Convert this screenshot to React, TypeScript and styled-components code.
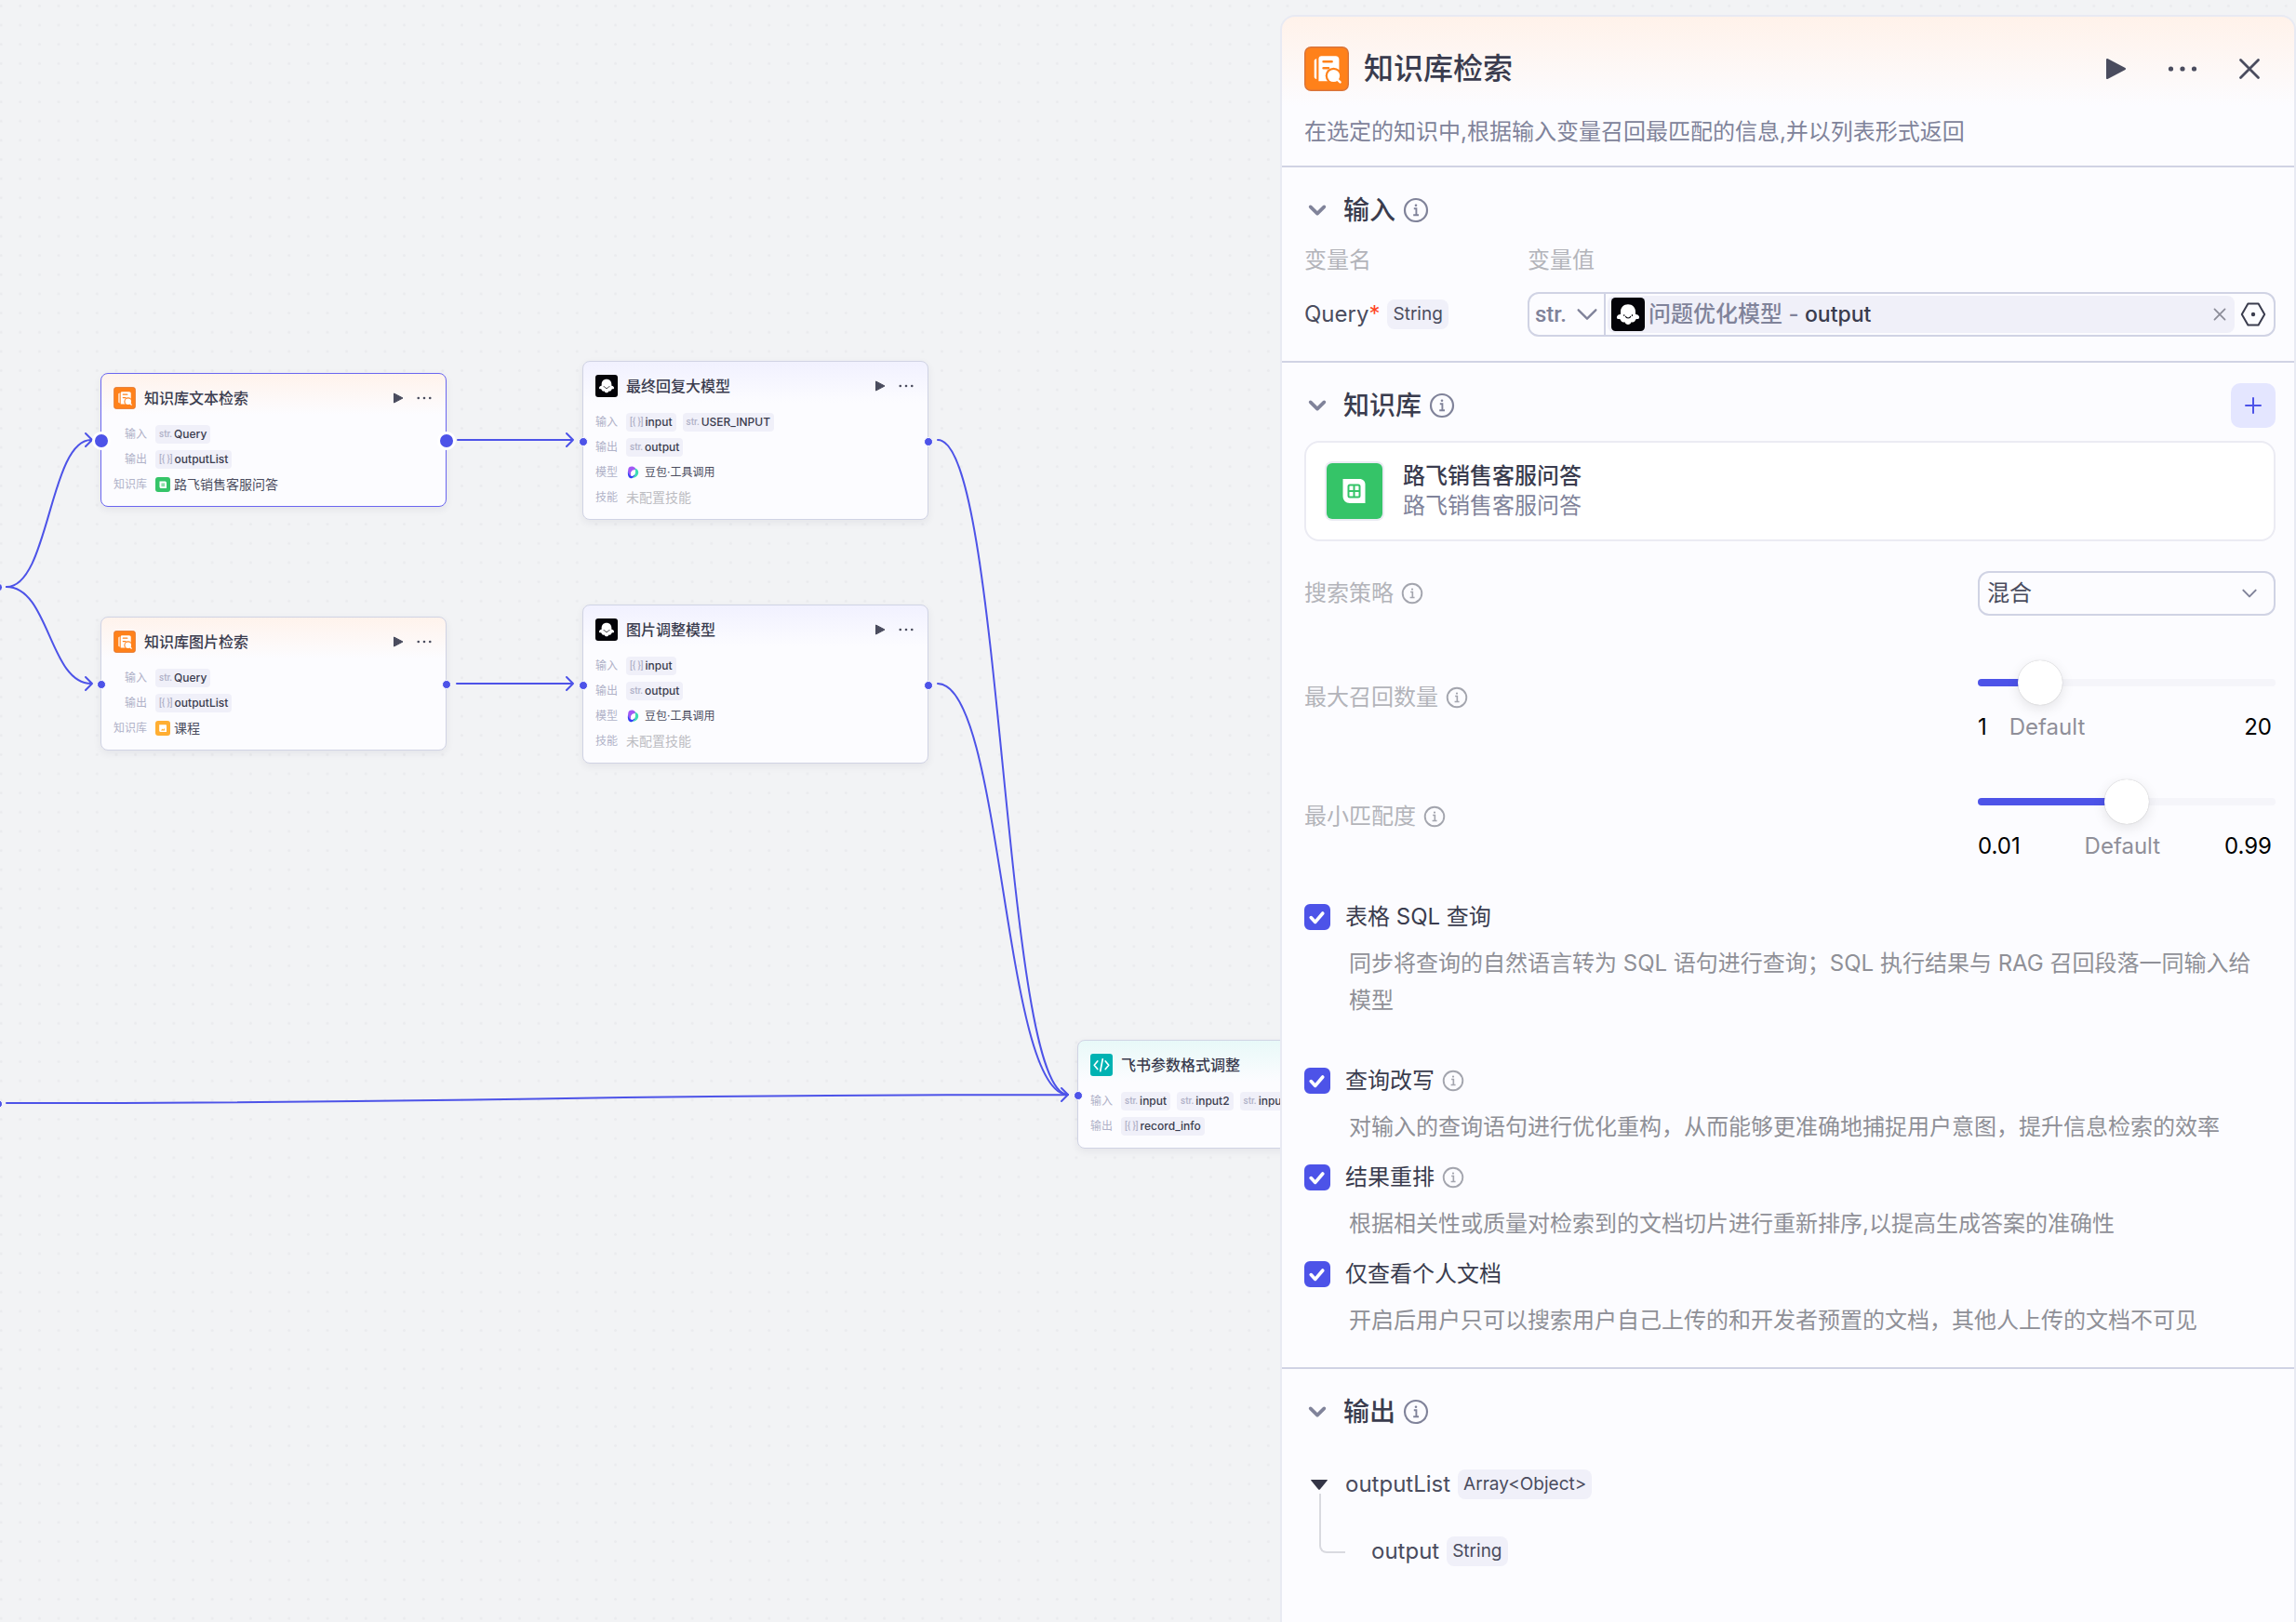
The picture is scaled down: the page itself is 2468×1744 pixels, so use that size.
import React, { useState } from "react";
import styled, { createGlobalStyle, css } from "styled-components";

const color = {
  canvas: "#f2f3f5",
  surface: "#fcfcff",
  accent: "#4d53e8",
  heading: "#3a3c4e",
  body: "#4a4c5e",
  muted: "#80839a",
  faint: "#b3b4ba",
  label: "#b0b2c8",
  hint: "#8f9097",
  line: "#d0d3e4",
  softLine: "#e8eaf3",
  chip: "#f0f0f9",
};

const GlobalStyle = createGlobalStyle`
  *, *::before, *::after { box-sizing: border-box; }
  body {
    margin: 0;
    background: ${color.canvas};
    color: ${color.heading};
    font-family: Inter, "Noto Sans CJK SC", sans-serif;
    font-size: 24px;
    line-height: 32px;
  }
  button, input, select { font: inherit; color: inherit; margin: 0; }
  h1, h2, h3, p { margin: 0; font-weight: 500; }
`;

/* ---------- shell ---------- */

const Workspace = styled.div`
  display: grid;
  grid-template-columns: minmax(0, 1fr);
  min-height: 100vh;
`;

const Canvas = styled.main`
  grid-area: 1 / 1;
  position: relative;
  overflow: hidden;
`;

const Wires = styled.svg`
  display: block;
  position: absolute;
  inset: 0;
  width: 100%;
  height: 100%;
`;

const IconButton = styled.button<{ $size: number; $tone?: string }>`
  display: inline-flex;
  align-items: center;
  align-self: center;
  justify-content: center;
  flex: none;
  width: ${(p) => p.$size}px;
  height: ${(p) => p.$size}px;
  padding: 0;
  border: 0;
  background: none;
  color: ${(p) => p.$tone ?? color.body};
  cursor: pointer;
`;

/* ---------- icons ---------- */

const Icon = styled.svg<{ $size: number }>`
  display: block;
  flex: none;
  width: ${(p) => p.$size}px;
  height: ${(p) => p.$size}px;
`;

const InfoIcon = ({ size, tone = color.muted }: { size: number; tone?: string }) => (
  <Icon $size={size} viewBox="0 0 28 28" fill="none" stroke={tone} strokeWidth="2.2" aria-hidden="true">
    <circle cx="14" cy="14" r="12" />
    <path d="M11.8 12.2H14.4V19M11.2 19.2H17" strokeWidth="1.9" />
    <circle cx="14" cy="8.8" r="1.3" fill={tone} stroke="none" />
  </Icon>
);

const ChevronIcon = ({ size, weight = 2 }: { size: number; weight?: number }) => (
  <Icon $size={size} viewBox="0 0 24 24" fill="none" stroke="currentColor" strokeWidth={weight} strokeLinecap="round" strokeLinejoin="round" aria-hidden="true">
    <path d="M4 8L12 16L20 8" />
  </Icon>
);

const PlayIcon = ({ size }: { size: number }) => (
  <Icon $size={size} viewBox="0 0 24 24" fill="currentColor" stroke="currentColor" strokeLinejoin="round" aria-hidden="true">
    <path d="M3 2L22 12L3 22Z" strokeWidth="2" />
  </Icon>
);

const MoreIcon = ({ size }: { size: number }) => (
  <Icon $size={size} viewBox="0 0 32 32" fill="currentColor" aria-hidden="true">
    <circle cx="3.5" cy="16" r="2.6" />
    <circle cx="16" cy="16" r="2.6" />
    <circle cx="28.5" cy="16" r="2.6" />
  </Icon>
);

const CrossIcon = ({ size, weight }: { size: number; weight: number }) => (
  <Icon $size={size} viewBox="0 0 24 24" fill="none" stroke="currentColor" strokeWidth={weight} strokeLinecap="round" aria-hidden="true">
    <path d="M2.5 2.5L21.5 21.5M21.5 2.5L2.5 21.5" />
  </Icon>
);

const KnowledgeIcon = ({ size }: { size: number }) => (
  <Icon $size={size} viewBox="0 0 48 48" aria-hidden="true">
    <rect x="0.7" y="0.7" width="46.6" height="46.6" rx="6.5" fill="#ff811a" stroke="#d9743a" strokeWidth="1.4" />
    <path d="M13.2 13.2C11.6 13.6 10.7 14.3 10.7 15.6V32.6C10.7 34 11.6 34.8 13.2 35Z" fill="#fff" />
    <path d="M18.4 10.3H33.6C36 10.3 37.4 11.7 37.4 14V37.2H15.4V13.4C15.4 11.4 16.6 10.3 18.4 10.3Z" fill="#fff" />
    <path d="M20.6 16.3H29.6M20.6 23.2H26" stroke="#ff811a" strokeWidth="2.6" strokeLinecap="round" />
    <circle cx="31.5" cy="31.5" r="8.8" fill="#ff811a" />
    <path d="M30 37.2H39V40H30Z" fill="#ff811a" />
    <circle cx="31.5" cy="31.5" r="6.6" fill="#fff" />
    <path d="M35.5 35.5L38.6 38.4" stroke="#fff" strokeWidth="2.4" strokeLinecap="round" />
  </Icon>
);

const BotIcon = ({ size }: { size: number }) => (
  <Icon $size={size} viewBox="0 0 36 36" aria-hidden="true">
    <rect width="36" height="36" rx="4.5" fill="#030308" />
    <path
      d="M18 7.2C22.8 7.2 26 10.6 26 15V17.8C26.6 18 28.2 18.2 29.4 19.4C30.9 21 29.9 23.4 27.6 23C26.8 22.9 26.3 23.2 26 24C25.4 26.2 23.4 27 21.6 26.2C20.8 28.2 19.6 28.9 18 28.9C16.4 28.9 15.2 28.2 14.4 26.2C12.6 27 10.6 26.2 10 24C9.7 23.2 9.2 22.9 8.4 23C6.1 23.4 5.1 21 6.6 19.4C7.8 18.2 9.4 18 10 17.8V15C10 10.6 13.2 7.2 18 7.2Z"
      fill="#fff"
    />
    <path d="M13.8 18.6V19.4M22.4 18.6V19.4" stroke="#030308" strokeWidth="1.1" strokeLinecap="round" />
    <path d="M15.4 20.2C16.2 22.6 20 22.6 20.8 20.2" stroke="#030308" strokeWidth="1.1" fill="none" strokeLinecap="round" />
  </Icon>
);

const CodeIcon = ({ size }: { size: number }) => (
  <Icon $size={size} viewBox="0 0 48 48" fill="none" aria-hidden="true">
    <rect width="48" height="48" rx="6" fill="#00b2b2" />
    <path d="M15.5 16L8.5 24.5L15.5 33M32.5 16L39.5 24.5L32.5 33M26.5 11.5L21.5 37.5" stroke="#fff" strokeWidth="3.4" strokeLinecap="round" strokeLinejoin="round" />
  </Icon>
);

const SheetIcon = ({ size }: { size: number }) => (
  <Icon $size={size} viewBox="0 0 64 64" fill="none" aria-hidden="true">
    <rect width="64" height="64" rx="8" fill="#ebebf3" />
    <rect x="2" y="2" width="60" height="60" rx="6" fill="#35c468" />
    <path d="M19.5 19H37.5C41 19 43.5 21.5 43.5 25V45H27C22.5 45 19.5 42 19.5 37.5Z" fill="#fff" />
    <rect x="25.5" y="25.5" width="12" height="13" rx="1.5" stroke="#35c468" strokeWidth="2" />
    <path d="M31.5 25.5V38.5M25.5 32H37.5" stroke="#35c468" strokeWidth="2" />
  </Icon>
);

const SheetBadge = () => (
  <Icon $size={16} viewBox="0 0 16 16" fill="none" aria-hidden="true">
    <rect width="16" height="16" rx="3" fill="#35c468" />
    <path d="M4.5 4.5H10.2C11.2 4.5 12 5.2 12 6.2V12H6.4C5.2 12 4.5 11.2 4.5 10.2Z" fill="#fff" />
    <rect x="6.4" y="6.4" width="3.8" height="3.8" fill="#8fdfab" />
  </Icon>
);

const ImageBadge = () => (
  <Icon $size={16} viewBox="0 0 16 16" fill="none" aria-hidden="true">
    <rect width="16" height="16" rx="3" fill="#ffae32" />
    <path d="M4.2 4.2H11C11.5 4.2 12 4.6 12 5.2V12H5.4C4.7 12 4.2 11.5 4.2 10.8Z" fill="#fff" />
    <path d="M6 10.4L7.4 8.6L8.4 9.6L10 8V10.4Z" fill="#ffae32" />
  </Icon>
);

const DoubaoIcon = () => (
  <Icon $size={16} viewBox="0 0 16 16" fill="none" aria-hidden="true">
    <path d="M2.4 4C3.4 1.4 7 .9 9 2.6C10.8 4 10.4 5 8.2 5.4C5.8 6 4.8 8 4.9 12.8C2.6 11.8 1.6 7.6 2.4 4Z" fill="#a259f5" />
    <path d="M2.2 6C2.4 9 3.4 11.2 5.4 11.6C7.6 12 9 10.6 9.8 9C9.6 12 7.4 14.6 4.8 14.2C1.8 13.6 1.4 9 2.2 6Z" fill="#3340f5" />
    <path d="M9.4 3.4C11.8 4 13.4 5.8 13.2 8.2C13 11 10.6 13.4 7 14C9.6 11.8 10.8 8 9.4 3.4Z" fill="#3ddcb4" />
    <path d="M7.6 5.4C9.4 5.2 10 6.6 9.6 8.6C9.2 10.6 7.8 12 6.2 11.8C4.8 11.4 4.8 9.2 5.4 7.6C5.8 6.4 6.6 5.6 7.6 5.4Z" fill="#fff" />
  </Icon>
);

const HexIcon = () => (
  <Icon $size={28} viewBox="0 0 28 28" fill="none" stroke="currentColor" strokeWidth="2" strokeLinejoin="round" aria-hidden="true">
    <path d="M8.4 2.4H19.6L26.2 14L19.6 25.6H8.4L1.8 14Z" />
    <circle cx="14" cy="14" r="2.2" fill="currentColor" stroke="none" />
  </Icon>
);

/* ---------- canvas nodes ---------- */

const NodeCard = styled.article<{ $x: number; $y: number; $tint: string; $selected?: boolean }>`
  position: absolute;
  left: ${(p) => p.$x}px;
  top: ${(p) => p.$y}px;
  display: flex;
  flex-direction: column;
  gap: 17px;
  width: 372px;
  padding: 14px 13px 13px;
  border: 1px solid ${(p) => (p.$selected ? "#6a66f0" : color.line)};
  border-radius: 8px;
  background: linear-gradient(${(p) => p.$tint}, ${color.surface} 44px) ${color.surface};
  box-shadow: 0 3px 8px rgba(40, 44, 70, 0.07);
  font-size: 12px;
  line-height: 20px;
`;

const NodeHeader = styled.header`
  display: flex;
  align-items: center;
  gap: 9px;
  height: 24px;
`;

const NodeTitle = styled.h3`
  flex: 1;
  font-size: 16px;
  line-height: 24px;
`;

const NodeActions = styled.div`
  display: flex;
  align-items: center;
  gap: 10px;
`;

const NodeRows = styled.dl<{ $labelWidth: number }>`
  display: grid;
  grid-template-columns: ${(p) => p.$labelWidth}px minmax(0, 1fr);
  gap: 7px 9px;
  margin: 0;
`;

const RowLabel = styled.dt`
  text-align: right;
  color: ${color.label};
`;

const RowValue = styled.dd<{ $gap: number }>`
  display: flex;
  align-items: center;
  gap: ${(p) => p.$gap}px;
  height: 20px;
  margin: 0;
  white-space: nowrap;
`;

const TypeMark = styled.span`
  color: ${color.label};
  font-family: Roboto, sans-serif;
  font-size: 10px;
`;

const VariableTag = styled.span`
  display: inline-flex;
  align-items: center;
  gap: 2px;
  height: 20px;
  padding: 0 4px;
  border-radius: 4px;
  background: ${color.chip};
  color: ${color.heading};
  font-weight: 500;
`;

const Plain = styled.span<{ $size: number; $tone?: string }>`
  color: ${(p) => p.$tone ?? color.body};
  font-size: ${(p) => p.$size}px;
`;

const Port = styled.span<{ $side: "left" | "right"; $large?: boolean }>`
  position: absolute;
  top: calc(50% + 1px);
  left: ${(p) => (p.$side === "left" ? "0" : "calc(100% + 1px)")};
  width: ${(p) => (p.$large ? 20 : 10)}px;
  height: ${(p) => (p.$large ? 20 : 10)}px;
  border: ${(p) => (p.$large ? 3 : 1)}px solid #fff;
  border-radius: 50%;
  background: ${color.accent};
  transform: translate(-50%, -50%);
`;

type Variable = { type: "str" | "list"; name: string };
type Row = { label: string; tags?: Variable[]; content?: React.ReactNode };
type FlowNode = {
  title: string;
  icon: React.ReactNode;
  x: number;
  y: number;
  tint: string;
  labelWidth: number;
  selected?: boolean;
  runnable?: boolean;
  rows: Row[];
};

const str = (name: string): Variable => ({ type: "str", name });
const list = (name: string): Variable => ({ type: "list", name });

const orangeTint = "#fff3ec";
const violetTint = "#f1f1ff";

const model = (
  <>
    <DoubaoIcon />
    <Plain $size={12}>豆包·工具调用</Plain>
  </>
);
const noSkill = (
  <Plain $size={14} $tone="#bcbdc2">
    未配置技能
  </Plain>
);

const nodes: FlowNode[] = [
  {
    title: "知识库文本检索",
    icon: <KnowledgeIcon size={24} />,
    x: 108,
    y: 401,
    tint: orangeTint,
    labelWidth: 36,
    selected: true,
    runnable: true,
    rows: [
      { label: "输入", tags: [str("Query")] },
      { label: "输出", tags: [list("outputList")] },
      { label: "知识库", content: <><SheetBadge /><Plain $size={14}>路飞销售客服问答</Plain></> },
    ],
  },
  {
    title: "知识库图片检索",
    icon: <KnowledgeIcon size={24} />,
    x: 108,
    y: 663,
    tint: orangeTint,
    labelWidth: 36,
    runnable: true,
    rows: [
      { label: "输入", tags: [str("Query")] },
      { label: "输出", tags: [list("outputList")] },
      { label: "知识库", content: <><ImageBadge /><Plain $size={14}>课程</Plain></> },
    ],
  },
  {
    title: "最终回复大模型",
    icon: <BotIcon size={24} />,
    x: 626,
    y: 388,
    tint: violetTint,
    labelWidth: 24,
    runnable: true,
    rows: [
      { label: "输入", tags: [list("input"), str("USER_INPUT")] },
      { label: "输出", tags: [str("output")] },
      { label: "模型", content: model },
      { label: "技能", content: noSkill },
    ],
  },
  {
    title: "图片调整模型",
    icon: <BotIcon size={24} />,
    x: 626,
    y: 650,
    tint: violetTint,
    labelWidth: 24,
    runnable: true,
    rows: [
      { label: "输入", tags: [list("input")] },
      { label: "输出", tags: [str("output")] },
      { label: "模型", content: model },
      { label: "技能", content: noSkill },
    ],
  },
  {
    title: "飞书参数格式调整",
    icon: <CodeIcon size={24} />,
    x: 1158,
    y: 1118,
    tint: "#e8f9f8",
    labelWidth: 24,
    rows: [
      { label: "输入", tags: [str("input"), str("input2"), str("input")] },
      { label: "输出", tags: [list("record_info")] },
    ],
  },
];

const NodeView = ({ node }: { node: FlowNode }) => (
  <NodeCard $x={node.x} $y={node.y} $tint={node.tint} $selected={node.selected}>
    <NodeHeader>
      {node.icon}
      <NodeTitle>{node.title}</NodeTitle>
      {node.runnable && (
        <NodeActions>
          <IconButton $size={16} aria-label="运行">
            <PlayIcon size={12} />
          </IconButton>
          <IconButton $size={20} aria-label="更多">
            <MoreIcon size={16} />
          </IconButton>
        </NodeActions>
      )}
    </NodeHeader>
    <NodeRows $labelWidth={node.labelWidth}>
      {node.rows.map((row) => (
        <React.Fragment key={row.label}>
          <RowLabel>{row.label}</RowLabel>
          <RowValue $gap={row.tags ? 7 : 4}>
            {row.content}
            {row.tags?.map((tag, i) => (
              <VariableTag key={i}>
                <TypeMark>{tag.type === "str" ? "str." : "[{ }]"}</TypeMark>
                {tag.name}
              </VariableTag>
            ))}
          </RowValue>
        </React.Fragment>
      ))}
    </NodeRows>
    <Port $side="left" $large={node.selected} />
    <Port $side="right" $large={node.selected} />
  </NodeCard>
);

const FlowWires = () => (
  <Wires aria-hidden="true">
    <defs>
      <pattern id="dots" x="-9.2" y="-4" width="20.64" height="20.64" patternUnits="userSpaceOnUse">
        <circle cx="10.3" cy="10.3" r="1.5" fill="#eaebee" />
      </pattern>
    </defs>
    <rect width="100%" height="100%" fill="url(#dots)" />
    <g fill="none" stroke={color.accent} strokeWidth="2" strokeLinecap="round" strokeLinejoin="round">
      <path d="M7 631C53 631 53 473 98 473M92 466L99 473L92 480" />
      <path d="M7 631C53 631 53 735 98 735M92 728L99 735L92 742" />
      <path d="M492 473H616M609 466L616 473L609 480" />
      <path d="M491 735H616M609 728L616 735L609 742" />
      <path d="M1008 473C1078 473 1078 1177 1148 1177" />
      <path d="M1008 735C1078 735 1078 1177 1148 1177" />
      <path d="M7 1186C577 1186 577 1177 1148 1177M1141 1170L1148 1177L1141 1184" />
    </g>
    <g fill={color.accent} stroke="#fff">
      <circle cx="-2" cy="631.5" r="4.5" />
      <circle cx="-2" cy="1187" r="4.5" />
    </g>
  </Wires>
);

/* ---------- side panel ---------- */

const Panel = styled.aside`
  grid-area: 1 / 1;
  position: relative;
  justify-self: end;
  width: min(1092px, 100%);
  margin-top: 16px;
  border: 2px solid ${color.softLine};
  border-bottom: 0;
  border-radius: 16px 16px 0 0;
  background: linear-gradient(#fff2ea, ${color.surface} 96px) ${color.surface};
`;

const PanelHeader = styled.header`
  padding: 32px 20px 20px 24px;
`;

const TitleBar = styled.div`
  display: flex;
  align-items: center;
  gap: 16px;
  height: 48px;
`;

const PanelTitle = styled.h1`
  flex: 1;
  font-size: 32px;
  line-height: 48px;
`;

const PanelActions = styled.div`
  display: flex;
  gap: 24px;
  padding-right: 4px;
`;

const Summary = styled.p`
  margin-top: 28px;
  color: ${color.muted};
  font-weight: 400;
`;

const Section = styled.section<{ $bottom: number }>`
  padding: 22px 20px ${(p) => p.$bottom}px 24px;
  border-top: 2px solid ${color.line};
`;

const SectionHead = styled.div`
  display: flex;
  align-items: center;
  height: 48px;
  gap: 8px;
`;

const SectionTitle = styled.h2`
  font-size: 28px;
  line-height: 40px;
  margin-left: 6px;
`;

const AddButton = styled.button`
  display: grid;
  place-items: center;
  width: 48px;
  height: 48px;
  margin-left: auto;
  padding: 0;
  border: 0;
  border-radius: 10px;
  background: #e4e6ff;
  color: ${color.accent};
`;

const FieldGrid = styled.div`
  display: grid;
  grid-template-columns: 240px minmax(0, 1fr);
  align-items: center;
  row-gap: 18px;
  margin-top: 14px;
`;

const FieldHead = styled.span`
  color: ${color.faint};
`;

const NameLine = styled.div`
  display: flex;
  align-items: center;
  gap: 8px;
  color: ${color.body};
`;

const Required = styled.span`
  color: #ff441e;
`;

const TypeBadge = styled.span`
  padding: 0 6px;
  border-radius: 8px;
  background: ${color.chip};
  color: ${color.body};
  font-size: 19px;
`;

const ValueBox = styled.div`
  display: flex;
  height: 48px;
  padding-right: 8px;
  border: 2px solid ${color.line};
  border-radius: 12px;
`;

const SelectShell = styled.span<{ $framed?: boolean }>`
  display: grid;
  align-items: center;
  color: ${color.muted};

  > * { grid-area: 1 / 1; }
  > svg { justify-self: end; pointer-events: none; }

  ${(p) =>
    p.$framed
      ? css`
          width: 320px;
          height: 48px;
          padding-right: 16px;
          border: 2px solid ${color.line};
          border-radius: 12px;
        `
      : css`
          width: 82px;
          padding-right: 4px;
          border-right: 2px solid ${color.line};
        `}
`;

const SelectBox = styled.select<{ $compact?: boolean }>`
  appearance: none;
  width: 100%;
  height: 44px;
  padding: 0 0 0 ${(p) => (p.$compact ? 6 : 8)}px;
  border: 0;
  background: none;
  outline: none;
  color: ${(p) => (p.$compact ? color.muted : color.body)};
  ${(p) =>
    p.$compact &&
    css`
      font-family: Roboto, sans-serif;
      font-weight: 500;
    `}
`;

const Reference = styled.div`
  display: flex;
  flex: 1;
  align-items: center;
  margin: 2px 6px 2px 2px;
  padding: 0 8px 0 4px;
  border-radius: 8px;
  background: ${color.chip};
  color: ${color.muted};
  font-weight: 500;
  white-space: pre;
`;

const ReferenceText = styled.span`
  flex: 1;
  padding-left: 4px;
`;

const ReferenceField = styled.b`
  color: ${color.heading};
  font-size: 23px;
  font-weight: 500;
`;

const DatasetCard = styled.div`
  display: flex;
  align-items: center;
  gap: 20px;
  margin-top: 14px;
  padding: 20px;
  border: 2px solid #ebebf3;
  border-radius: 16px;
  background: #fff;
`;

const DatasetName = styled.h3`
  font-size: 24px;
  line-height: 32px;
`;

const DatasetNote = styled.p`
  color: ${color.muted};
  font-weight: 400;
`;

const Settings = styled.div`
  display: grid;
  gap: 32px;
  margin-top: 32px;
`;

const SettingRow = styled.div<{ $spaced?: boolean }>`
  display: flex;
  align-items: center;
  justify-content: space-between;
  margin-bottom: ${(p) => (p.$spaced ? 8 : 0)}px;
`;

const SettingLabel = styled.label`
  display: flex;
  align-items: center;
  gap: 8px;
  color: ${color.faint};
`;

const SliderBlock = styled.div`
  width: 320px;
  padding-top: 8px;
`;

const Slider = styled.input`
  appearance: none;
  display: block;
  width: 100%;
  height: 48px;
  background: none;

  &::-webkit-slider-runnable-track {
    height: 8px;
    border-radius: 4px;
    background: linear-gradient(${color.accent}, ${color.accent}) 0 0 / var(--filled) 100% no-repeat #f5f5fa;
  }

  &::-webkit-slider-thumb {
    appearance: none;
    width: 48px;
    height: 48px;
    margin-top: -20px;
    border: 0;
    border-radius: 50%;
    background: #fff;
    box-shadow: 0 0 1px rgba(0, 0, 0, 0.3), 0 4px 14px rgba(0, 0, 0, 0.1);
  }
`;

const SliderScale = styled.div<{ $near?: boolean }>`
  display: flex;
  justify-content: ${(p) => (p.$near ? "flex-start" : "space-between")};
  gap: 24px;
  padding-right: 4px;
  margin-top: 8px;
  color: #000;

  span:nth-child(2) { color: #8f8f99; }
  span:last-child { margin-left: ${(p) => (p.$near ? "auto" : "0")}; }
`;

const Options = styled.div`
  display: grid;
  gap: 18px;
  margin-top: 44px;
`;

const Option = styled.div<{ $after?: number }>`
  margin-bottom: ${(p) => p.$after ?? 0}px;
`;

const OptionHead = styled.div`
  display: flex;
  align-items: center;
  gap: 8px;
`;

const OptionLabel = styled.label`
  display: flex;
  align-items: center;
  gap: 16px;
`;

const TickShell = styled.span`
  display: grid;
  place-items: center;

  > * { grid-area: 1 / 1; }
  > svg { pointer-events: none; }
`;

const Tick = styled.input`
  appearance: none;
  width: 28px;
  height: 28px;
  border: 2px solid ${color.line};
  border-radius: 6px;

  &:checked {
    border-color: ${color.accent};
    background: ${color.accent};
  }
`;

const OptionNote = styled.p`
  margin-top: 14px;
  padding: 0 12px 0 48px;
  color: ${color.hint};
  font-weight: 400;
  line-height: 40px;
`;

const Tree = styled.ul`
  margin: 38px 0 0;
  padding: 0 0 0 6px;
  list-style: none;
`;

const SubTree = styled.ul`
  margin: 0;
  padding: 0;
  list-style: none;
`;

const TreeLine = styled.div`
  display: flex;
  align-items: center;
  gap: 18px;
`;

const TreeChild = styled.li`
  display: grid;
  grid-template-columns: 28px 1fr;
  align-items: end;
  column-gap: 28px;
  padding-left: 10px;
`;

const Branch = styled.span`
  height: 64px;
  margin: -6px 0 14px;
  border: solid #d9dae0;
  border-width: 0 0 2px 2px;
  border-bottom-left-radius: 8px;
`;

const TreeToggle = () => (
  <Icon $size={20} viewBox="0 0 20 20" fill="#343546" aria-hidden="true">
    <path d="M1.8 5H18.2C18.9 5 19 5.6 18.6 6.1L11 15.2C10.4 15.9 9.6 15.9 9 15.2L1.4 6.1C1 5.6 1.1 5 1.8 5Z" />
  </Icon>
);

const SectionHeading = ({ title, children }: { title: string; children?: React.ReactNode }) => (
  <SectionHead>
    <IconButton $size={28} $tone={color.muted} aria-label={`折叠${title}`}>
      <ChevronIcon size={22} weight={4} />
    </IconButton>
    <SectionTitle>{title}</SectionTitle>
    <InfoIcon size={28} />
    {children}
  </SectionHead>
);

type SliderProps = {
  id: string;
  label: string;
  min: number;
  max: number;
  step: number;
  initial: number;
  near?: boolean;
};

const SliderSetting = ({ id, label, min, max, step, initial, near }: SliderProps) => {
  const [value, setValue] = useState(initial);
  const ratio = (value - min) / (max - min);
  const filled = { "--filled": `${24 + ratio * 272}px` } as React.CSSProperties;
  return (
    <SettingRow>
      <SettingLabel htmlFor={id}>
        {label}
        <InfoIcon size={24} tone="#a3a5ae" />
      </SettingLabel>
      <SliderBlock>
        <Slider
          id={id}
          type="range"
          min={min}
          max={max}
          step={step}
          value={value}
          style={filled}
          onChange={(e) => setValue(Number(e.target.value))}
        />
        <SliderScale $near={near}>
          <span>{min}</span>
          <span>Default</span>
          <span>{max}</span>
        </SliderScale>
      </SliderBlock>
    </SettingRow>
  );
};

const options = [
  {
    id: "sql",
    label: "表格 SQL 查询",
    note: "同步将查询的自然语言转为 SQL 语句进行查询；SQL 执行结果与 RAG 召回段落一同输入给模型",
    after: 32,
  },
  {
    id: "rewrite",
    label: "查询改写",
    info: true,
    note: "对输入的查询语句进行优化重构，从而能够更准确地捕捉用户意图，提升信息检索的效率",
  },
  {
    id: "rerank",
    label: "结果重排",
    info: true,
    note: "根据相关性或质量对检索到的文档切片进行重新排序,以提高生成答案的准确性",
  },
  {
    id: "personal",
    label: "仅查看个人文档",
    note: "开启后用户只可以搜索用户自己上传的和开发者预置的文档，其他人上传的文档不可见",
  },
];

const DetailPanel = () => (
  <Panel>
    <PanelHeader>
      <TitleBar>
        <KnowledgeIcon size={48} />
        <PanelTitle>知识库检索</PanelTitle>
        <PanelActions>
          <IconButton $size={48} aria-label="运行">
            <PlayIcon size={24} />
          </IconButton>
          <IconButton $size={48} aria-label="更多">
            <MoreIcon size={32} />
          </IconButton>
          <IconButton $size={48} aria-label="关闭">
            <CrossIcon size={24} weight={2.8} />
          </IconButton>
        </PanelActions>
      </TitleBar>
      <Summary>在选定的知识中,根据输入变量召回最匹配的信息,并以列表形式返回</Summary>
    </PanelHeader>

    <Section $bottom={26}>
      <SectionHeading title="输入" />
      <FieldGrid>
        <FieldHead>变量名</FieldHead>
        <FieldHead>变量值</FieldHead>
        <NameLine>
          <span>
            Query<Required>*</Required>
          </span>
          <TypeBadge>String</TypeBadge>
        </NameLine>
        <ValueBox>
          <SelectShell>
            <SelectBox $compact aria-label="变量类型" defaultValue="str">
              <option value="str">str.</option>
            </SelectBox>
            <ChevronIcon size={28} weight={2} />
          </SelectShell>
          <Reference>
            <BotIcon size={36} />
            <ReferenceText>
              问题优化模型 - <ReferenceField>output</ReferenceField>
            </ReferenceText>
            <IconButton $size={16} $tone="#8b8c98" aria-label="清除">
              <CrossIcon size={14} weight={3} />
            </IconButton>
          </Reference>
          <IconButton $size={28} $tone={color.heading} aria-label="选择变量">
            <HexIcon />
          </IconButton>
        </ValueBox>
      </FieldGrid>
    </Section>

    <Section $bottom={30}>
      <SectionHeading title="知识库">
        <AddButton aria-label="添加知识库">
          <Icon $size={20} viewBox="0 0 20 20" stroke="currentColor" strokeWidth="2" strokeLinecap="round" aria-hidden="true">
            <path d="M10 2V18M2 10H18" />
          </Icon>
        </AddButton>
      </SectionHeading>
      <DatasetCard>
        <SheetIcon size={64} />
        <div>
          <DatasetName>路飞销售客服问答</DatasetName>
          <DatasetNote>路飞销售客服问答</DatasetNote>
        </div>
      </DatasetCard>
      <Settings>
        <SettingRow $spaced>
          <SettingLabel htmlFor="strategy">
            搜索策略
            <InfoIcon size={24} tone="#a3a5ae" />
          </SettingLabel>
          <SelectShell $framed>
            <SelectBox id="strategy" defaultValue="mixed">
              <option value="mixed">混合</option>
            </SelectBox>
            <ChevronIcon size={20} weight={2.4} />
          </SelectShell>
        </SettingRow>
        <SliderSetting id="recall" label="最大召回数量" min={1} max={20} step={1} initial={4} near />
        <SliderSetting id="match" label="最小匹配度" min={0.01} max={0.99} step={0.01} initial={0.5} />
      </Settings>
      <Options>
        {options.map((option) => (
          <Option key={option.id} $after={option.after}>
            <OptionHead>
              <OptionLabel>
                <TickShell>
                  <Tick type="checkbox" defaultChecked />
                  <Icon $size={28} viewBox="0 0 28 28" fill="none" stroke="#fff" strokeWidth="3.6" strokeLinecap="round" strokeLinejoin="round" aria-hidden="true">
                    <path d="M7.2 14.6L11.8 19.4L19.8 10" />
                  </Icon>
                </TickShell>
                {option.label}
              </OptionLabel>
              {option.info && <InfoIcon size={24} tone="#a3a5ae" />}
            </OptionHead>
            <OptionNote>{option.note}</OptionNote>
          </Option>
        ))}
      </Options>
    </Section>

    <Section $bottom={24}>
      <SectionHeading title="输出" />
      <Tree>
        <li>
          <TreeLine>
            <IconButton $size={20} aria-label="折叠">
              <TreeToggle />
            </IconButton>
            <NameLine>
              outputList
              <TypeBadge>{"Array<Object>"}</TypeBadge>
            </NameLine>
          </TreeLine>
          <SubTree>
            <TreeChild>
              <Branch />
              <NameLine>
                output
                <TypeBadge>String</TypeBadge>
              </NameLine>
            </TreeChild>
          </SubTree>
        </li>
      </Tree>
    </Section>
  </Panel>
);

export default function App() {
  return (
    <>
      <GlobalStyle />
      <Workspace>
        <Canvas>
          <FlowWires />
          {nodes.map((node) => (
            <NodeView key={node.title} node={node} />
          ))}
        </Canvas>
        <DetailPanel />
      </Workspace>
    </>
  );
}
